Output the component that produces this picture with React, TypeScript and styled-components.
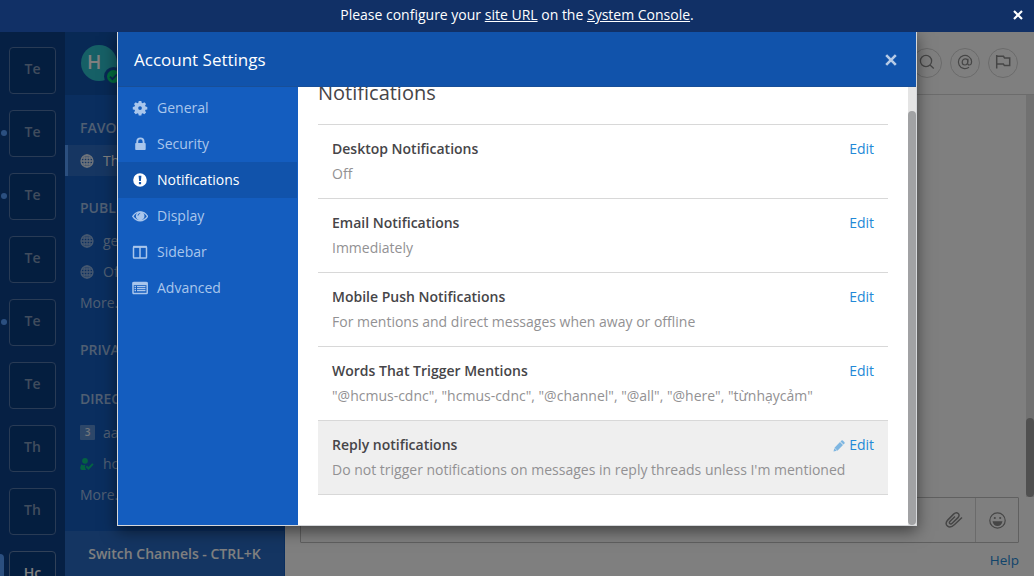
import React from "react";
import styled, { createGlobalStyle } from "styled-components";

const Global = createGlobalStyle`
  * { box-sizing: border-box; }
  html, body { margin: 0; height: 100%; overflow: hidden; }
  body { font-family: "Open Sans", sans-serif; font-size: 14px; color: #464548; background: #fff; }
  svg { display: block; flex: none; }
`;

const Page = styled.div`
  width: 1034px;
  height: 576px;
  display: flex;
  flex-direction: column;
  overflow: hidden;
`;

const Announcement = styled.div`
  height: 32px;
  flex: none;
  display: flex;
  align-items: center;
  background: #113066;
  color: #fff;
  line-height: 20px;
  padding: 0 11px 2px 0;
`;
const AnnouncementText = styled.div`
  flex: 1;
  text-align: center;
  padding-left: 21px;
  a { color: #fff; text-decoration: underline; }
`;

const Workspace = styled.div`
  position: relative;
  flex: 1;
  min-height: 0;
  display: flex;
`;

const TeamBar = styled.div`
  width: 65px;
  flex: none;
  padding: 15px 0 0 9px;
  background: #0d4189;
  display: flex;
  flex-direction: column;
  gap: 16px;
  overflow: hidden;
`;
const TeamButton = styled.div<{ $active?: boolean }>`
  position: relative;
  width: 47px;
  height: 47px;
  flex: none;
  display: flex;
  align-items: center;
  justify-content: center;
  padding-bottom: 4px;
  border: 1px solid ${(p) => (p.$active ? "#6283b0" : "#5377ab")};
  border-radius: 4px;
  background: #083c7e;
  color: ${(p) => (p.$active ? "#fff" : "#8199bb")};
  font-weight: 600;
`;
const Unread = styled.i<{ $active?: boolean }>`
  position: absolute;
  left: ${(p) => (p.$active ? "-12px" : "-9px")};
  top: ${(p) => (p.$active ? "2px" : "19px")};
  width: 6px;
  height: ${(p) => (p.$active ? "43px" : "6px")};
  border-radius: ${(p) => (p.$active ? "0 4px 4px 0" : "50%")};
  background: #579eff;
`;

const Channels = styled.div`
  width: 220px;
  flex: none;
  background: #145dbf;
  display: flex;
  flex-direction: column;
`;
const ProfileBar = styled.div`
  height: 63px;
  flex: none;
  padding: 13px 0 0 16px;
  background: #1153ab;
`;
const Avatar = styled.div`
  position: relative;
  width: 36px;
  height: 36px;
  border-radius: 50%;
  background: #2cc0cc;
  color: #fff;
  font-size: 19px;
  line-height: 35px;
  padding-left: 6px;
  font-weight: 600;
`;
const Badge = styled.div`
  position: absolute;
  left: 23px;
  top: 22px;
  padding: 3px;
  border-radius: 50%;
  background: #1153ab;
`;
const ChannelList = styled.div`
  flex: 1;
  display: flex;
  flex-direction: column;
`;
const GroupTitle = styled.div<{ $top: number; $gap: number }>`
  margin: ${(p) => p.$top}px 0 ${(p) => p.$gap}px 15px;
  height: 20px;
  line-height: 20px;
  font-weight: 600;
  color: #a1bee5;
`;
const Channel = styled.div<{ $active?: boolean }>`
  height: 31px;
  display: flex;
  align-items: center;
  gap: 9px;
  padding-left: ${(p) => (p.$active ? "12px" : "15px")};
  border-left: ${(p) => (p.$active ? "3px solid #579eff" : "0")};
  background: ${(p) => (p.$active ? "#2c6dc5" : "transparent")};
  color: ${(p) => (p.$active ? "#fff" : "#a1bee5")};
  svg { opacity: 0.85; }
`;
const Mention = styled.b`
  width: 15px;
  height: 15px;
  margin-right: -1px;
  border-radius: 1px;
  background: #5b8ed2;
  color: #e0eaf7;
  font-size: 10px;
  line-height: 15px;
  font-weight: 600;
  text-align: center;
`;
const Switcher = styled.div`
  height: 45px;
  width: 219px;
  display: flex;
  align-items: center;
  justify-content: center;
  background: #286ac4;
  color: #fff;
  font-weight: 600;
`;

const Main = styled.div`
  flex: 1;
  display: flex;
  flex-direction: column;
  background: #fff;
  color: #8c8c8c;
`;
const MainHeader = styled.div`
  height: 63px;
  flex: none;
  display: flex;
  justify-content: flex-end;
  align-items: center;
  gap: 8px;
  padding: 0 16px 1px 0;
  border-bottom: 1px solid #d8d8d8;
`;
const RoundButton = styled.div`
  width: 30px;
  height: 30px;
  display: grid;
  place-items: center;
  padding-bottom: 1px;
  border: 1px solid #d6d6d6;
  border-radius: 50%;
`;
const Posts = styled.div`
  flex: 1;
  min-height: 0;
  display: flex;
  justify-content: flex-end;
`;
const PostTrack = styled.div`
  width: 8px;
  padding-top: 323px;
  background: #e3e3e3;
`;
const PostThumb = styled.div`
  height: 79px;
  border-radius: 4px;
  background: #a0a0a0;
`;
const Composer = styled.div`
  height: 46px;
  width: 719px;
  margin: 0 0 0 15px;
  flex: none;
  display: flex;
  justify-content: flex-end;
  border: 1px solid #c0c0c0;
  border-radius: 1px;
`;
const ComposerTool = styled.div<{ $line?: boolean }>`
  width: 43px;
  display: grid;
  place-items: center;
  border-left: ${(p) => (p.$line ? "1px solid #d6d6d6" : "0")};
`;
const Help = styled.div`
  height: 33px;
  flex: none;
  padding: 7px 15px 0 0;
  line-height: 20px;
  font-size: 13.5px;
  text-align: right;
  color: #2389d7;
`;
const Backdrop = styled.div`
  position: absolute;
  inset: 0;
  background: rgba(0, 0, 0, 0.5);
`;

const Modal = styled.div`
  position: absolute;
  left: 117px;
  top: -1px;
  width: 800px;
  height: 495px;
  display: flex;
  flex-direction: column;
  border: 1px solid #d5d7da;
  border-top-color: #1153ab;
  box-shadow: 0 5px 15px rgba(0, 0, 0, 0.5);
  clip-path: inset(1px -30px -30px -30px);
  background: #fff;
`;
const ModalHeader = styled.div`
  height: 55px;
  flex: none;
  display: flex;
  align-items: center;
  justify-content: space-between;
  padding: 0 19px 0 16px;
  background: #1153ab;
  border-bottom: 1px solid #184f98;
  color: #fff;
  font-size: 17px;
  svg { margin-top: 1px; }
`;
const ModalBody = styled.div`
  flex: 1;
  min-height: 0;
  display: flex;
`;
const Tabs = styled.div`
  width: 180px;
  flex: none;
  padding: 3px 1px 0 0;
  background: #145dbf;
`;
const Tab = styled.div<{ $active?: boolean }>`
  height: 36px;
  display: flex;
  align-items: center;
  gap: 9px;
  padding: 0 0 2px 14px;
  color: ${(p) => (p.$active ? "#fff" : "#a9c6ec")};
  background: ${(p) => (p.$active ? "#1153ab" : "transparent")};
  svg { margin-top: 1px; }
`;
const Settings = styled.div`
  flex: 1;
  min-width: 0;
  padding: 0 20px;
  overflow: hidden;
`;
const SettingsTitle = styled.div`
  height: 37px;
  display: flex;
  align-items: flex-end;
  padding-bottom: 16px;
  font-size: 20px;
  line-height: 30px;
`;
const Setting = styled.div<{ $hover?: boolean }>`
  height: 74px;
  padding: 14px 14px 0;
  border-top: 1px solid #d8d8d8;
  background: ${(p) => (p.$hover ? "#efefef" : "transparent")};
  &:last-child { height: 75px; border-bottom: 1px solid #d8d8d8; }
`;
const SettingHead = styled.div`
  display: flex;
  justify-content: space-between;
  height: 20px;
  line-height: 20px;
  font-weight: 600;
`;
const Edit = styled.span`
  display: flex;
  align-items: center;
  gap: 4px;
  color: #2389d7;
  font-weight: 400;
  svg { opacity: 0.55; margin-top: 2px; }
`;
const SettingText = styled.div`
  margin-top: 5px;
  line-height: 20px;
  color: #929193;
  white-space: nowrap;
`;
const ScrollTrack = styled.div`
  width: 8px;
  padding-top: 24px;
  background: #e4e4e4;
`;
const ScrollThumb = styled.div`
  height: 100%;
  border-radius: 4px;
  background: #a1a2a4;
`;

const Close = ({ size, color }: { size: number; color: string }) => (
  <svg width={size} height={size} viewBox="0 0 12 12" stroke={color} strokeWidth="2.6">
    <path d="M1.200 1.200l9.600 9.600M10.800 1.200l-9.600 9.600" />
  </svg>
);

const Globe = () => (
  <svg width="14" height="14" viewBox="0 0 14 14" fill="none" stroke="currentColor" strokeWidth="1.300">
    <circle cx="7" cy="7" r="6" />
    <ellipse cx="7" cy="7" rx="3" ry="6" />
    <path d="M7 1v12M1 7h12M2 4h10M2 10h10" />
  </svg>
);

const Pencil = () => (
  <svg width="12" height="12" viewBox="0 0 12 12" fill="currentColor">
    <path d="M.5 11.600L1.300 8.300 3.800 10.800zM1.500 7.700L7 2.100 10 5.100 4.400 10.700zM7.500 1.600L8.500.6q.6-.5 1.300 0l1.700 1.700q.5.6 0 1.300L10.500 4.600z" />
  </svg>
);

const tabIcons: Record<string, React.ReactNode> = {
  General: (
    <svg width="16" height="16" viewBox="0 0 16 16" fill="currentColor">
      <path fillRule="evenodd" d="M6.600 1.200h2.800l.4 1.900 1.100.5 1.700-1.100 1.900 1.900-1.100 1.700.5 1.100 1.900.4v2.700l-1.900.4-.5 1.100 1.100 1.700-1.900 1.900-1.700-1.100-1.100.5-.4 1.900H6.600l-.4-1.900-1.100-.5-1.700 1.100-1.900-1.900 1.100-1.700-.5-1.100-1.900-.4V7.600l1.900-.4.5-1.100-1.100-1.700 1.900-1.900 1.700 1.100 1.100-.5zM8 6.800a2 2 0 1 0 0 4 2 2 0 0 0 0-4z" transform="translate(.6 -.1) scale(.93)" />
    </svg>
  ),
  Security: (
    <svg width="16" height="16" viewBox="0 0 16 16" fill="currentColor">
      <path fillRule="evenodd" d="M4.300 7V5.500a4.100 4.100 0 0 1 8.200 0V7h.4q.8 0 .8.8v5.400q0 .8-.8.8H4q-.8 0-.8-.8V7.800q0-.8.8-.8zM6.200 7h4.400V5.500a2.200 2.200 0 0 0-4.400 0z" />
    </svg>
  ),
  Notifications: (
    <svg width="16" height="16" viewBox="0 0 16 16" fill="currentColor">
      <path fillRule="evenodd" d="M8 1.200a6.800 6.800 0 1 0 0 13.600A6.800 6.800 0 0 0 8 1.200zM6.600 3.800h2.800L8.900 9H7.100zM6.900 10h2.200v2.200H6.900z" />
    </svg>
  ),
  Display: (
    <svg width="16" height="16" viewBox="0 0 16 16">
      <path d="M.8 8.300Q3.700 3.900 8.200 3.900T15.600 8.300Q12.700 12.700 8.200 12.700T.8 8.300z" fill="none" stroke="currentColor" strokeWidth="1.400" />
      <circle cx="8.200" cy="7.900" r="4.300" fill="currentColor" />
      <path d="M6 7.700A2.300 2.300 0 0 1 8.200 5.400" fill="none" stroke="#145dbf" strokeWidth=".8" />
    </svg>
  ),
  Sidebar: (
    <svg width="16" height="16" viewBox="0 0 16 16" fill="none" stroke="currentColor">
      <rect x="1.500" y="2.700" width="13" height="11.300" rx=".8" strokeWidth="1.500" />
      <path d="M1.200 2.800h13.600" strokeWidth="2" />
      <path d="M8 3v11" strokeWidth="1.500" />
    </svg>
  ),
  Advanced: (
    <svg width="16" height="16" viewBox="0 0 16 16" fill="none" stroke="currentColor">
      <rect x="1" y="2.600" width="14.200" height="11" rx=".8" strokeWidth="1.500" />
      <path d="M.6 3.700h14.800" strokeWidth="3" />
      <path d="M2.500 6.600h1.500M5 6.600h8.500M2.500 8.600h1.500M5 8.600h8.500M2.500 10.600h1.500M5 10.600h8.500" strokeWidth="1.400" />
    </svg>
  ),
};

const teams = ["Te", "Te", "Te", "Te", "Te", "Te", "Th", "Th", "Hc"];
const unreadTeams = [1, 2, 4];
const settings = [
  ["Desktop Notifications", "Off"],
  ["Email Notifications", "Immediately"],
  ["Mobile Push Notifications", "For mentions and direct messages when away or offline"],
  ["Words That Trigger Mentions", '"@hcmus-cdnc", "hcmus-cdnc", "@channel", "@all", "@here", "từnhạycảm"'],
  ["Reply notifications", "Do not trigger notifications on messages in reply threads unless I'm mentioned"],
];

export default function App() {
  return (
    <Page>
      <Global />
      <Announcement>
        <AnnouncementText>
          Please configure your <a>site URL</a> on the <a>System Console</a>.
        </AnnouncementText>
        <Close size={10} color="#fff" />
      </Announcement>
      <Workspace>
        <TeamBar>
          {teams.map((name, i) => (
            <TeamButton key={i} $active={i === 8}>
              {(i === 8 || unreadTeams.includes(i)) && <Unread $active={i === 8} />}
              {name}
            </TeamButton>
          ))}
        </TeamBar>
        <Channels>
          <ProfileBar>
            <Avatar>
              H
              <Badge>
                <svg width="13" height="13" viewBox="0 0 13 13">
                  <circle cx="6.500" cy="6.500" r="6.500" fill="#06d67c" />
                  <path d="M3 6.700l2.400 2.400 4.600-4.700" fill="none" stroke="#1153ab" strokeWidth="1.800" />
                </svg>
              </Badge>
            </Avatar>
          </ProfileBar>
          <ChannelList>
            <GroupTitle $top={23} $gap={7}>FAVORITE</GroupTitle>
            <Channel $active><Globe />This</Channel>
            <GroupTitle $top={22} $gap={7}>PUBLIC</GroupTitle>
            <Channel><Globe />general</Channel>
            <Channel><Globe />Off-Topic</Channel>
            <Channel>More...</Channel>
            <GroupTitle $top={22} $gap={0}>PRIVATE</GroupTitle>
            <GroupTitle $top={29} $gap={8}>DIRECT</GroupTitle>
            <Channel><Mention>3</Mention>aa</Channel>
            <Channel>
              <svg width="14" height="14" viewBox="0 0 14 14">
                <circle cx="5" cy="3.800" r="2.900" fill="#06d67c" />
                <path d="M1.300 7.300Q3 8.800 5.500 7.800L4.800 9.500 6 13H2Q-.3 12.800.4 10z" fill="#06d67c" />
                <path d="M6.300 9.300l2.200 2.200 4.400-4.600" fill="none" stroke="#06d67c" strokeWidth="2" />
              </svg>
              hcmus
            </Channel>
            <Channel>More...</Channel>
          </ChannelList>
          <Switcher>Switch Channels - CTRL+K</Switcher>
        </Channels>
        <Main>
          <MainHeader>
            <RoundButton>
              <svg width="16" height="16" viewBox="0 0 16 16" fill="none" stroke="currentColor" strokeWidth="1.300">
                <circle cx="7" cy="7" r="5.600" />
                <path d="M11 11l3.800 3.400" />
              </svg>
            </RoundButton>
            <RoundButton>
              <svg width="16" height="16" viewBox="0 0 16 16" fill="none" stroke="currentColor" strokeWidth="1.200">
                <path d="M12 13.300A6.600 6.600 0 1 1 14.600 7.500C14.600 10 13.500 11 12.300 11S10.500 10 10.600 8.800L11 4.700" />
                <path d="M10.800 7.300C10.800 9.500 9.500 11 7.800 11S5.200 9.800 5.200 8.300 6.300 4.800 8.400 4.800 10.800 6 10.800 7.300z" />
              </svg>
            </RoundButton>
            <RoundButton>
              <svg width="16" height="16" viewBox="0 0 16 16" fill="none" stroke="currentColor" strokeWidth="1.500">
                <path d="M1.700 1v13.500M1.700 2.300h6.800l1 1.600h5.200v7.700H9.400l-1-1.500H1.700" />
              </svg>
            </RoundButton>
          </MainHeader>
          <Posts><PostTrack><PostThumb /></PostTrack></Posts>
          <Composer>
            <ComposerTool>
              <svg width="18" height="18" viewBox="0 0 18 18" fill="none" stroke="currentColor" strokeWidth="1.500">
                <path d="M17 6.500L9.600 13.500C7 16 4.600 16.800 2.600 15.200S.6 11.200 2.900 8.900L8.600 3.100C10.200 1.600 12 1.400 13.200 2.500S14.300 5.300 13 6.600L7.200 12.300C6.300 13.200 5.300 13.200 4.700 12.500S4.300 11 5.100 10.200L10 5.500" />
              </svg>
            </ComposerTool>
            <ComposerTool $line>
              <svg width="17" height="17" viewBox="0 0 17 17" fill="none" stroke="currentColor" strokeWidth="1.200">
                <circle cx="8.500" cy="8.500" r="7.700" />
                <circle cx="5.800" cy="6" r="1.100" fill="currentColor" stroke="none" />
                <circle cx="11.200" cy="6" r="1.100" fill="currentColor" stroke="none" />
                <path d="M3.500 9.300h10Q12.700 14 8.500 14T3.500 9.300z" fill="currentColor" stroke="none" />
              </svg>
            </ComposerTool>
          </Composer>
          <Help>Help</Help>
        </Main>
        <Backdrop />
        <Modal>
          <ModalHeader>
            Account Settings
            <Close size={12} color="#b7cbe6" />
          </ModalHeader>
          <ModalBody>
            <Tabs>
              {Object.keys(tabIcons).map((name) => (
                <Tab key={name} $active={name === "Notifications"}>
                  {tabIcons[name]}
                  <span>{name}</span>
                </Tab>
              ))}
            </Tabs>
            <Settings>
              <SettingsTitle>Notifications</SettingsTitle>
              {settings.map(([title, text], i) => (
                <Setting key={title} $hover={i === 4}>
                  <SettingHead>
                    {title}
                    <Edit>{i === 4 && <Pencil />}Edit</Edit>
                  </SettingHead>
                  <SettingText>{text}</SettingText>
                </Setting>
              ))}
            </Settings>
            <ScrollTrack><ScrollThumb /></ScrollTrack>
          </ModalBody>
        </Modal>
      </Workspace>
    </Page>
  );
}
